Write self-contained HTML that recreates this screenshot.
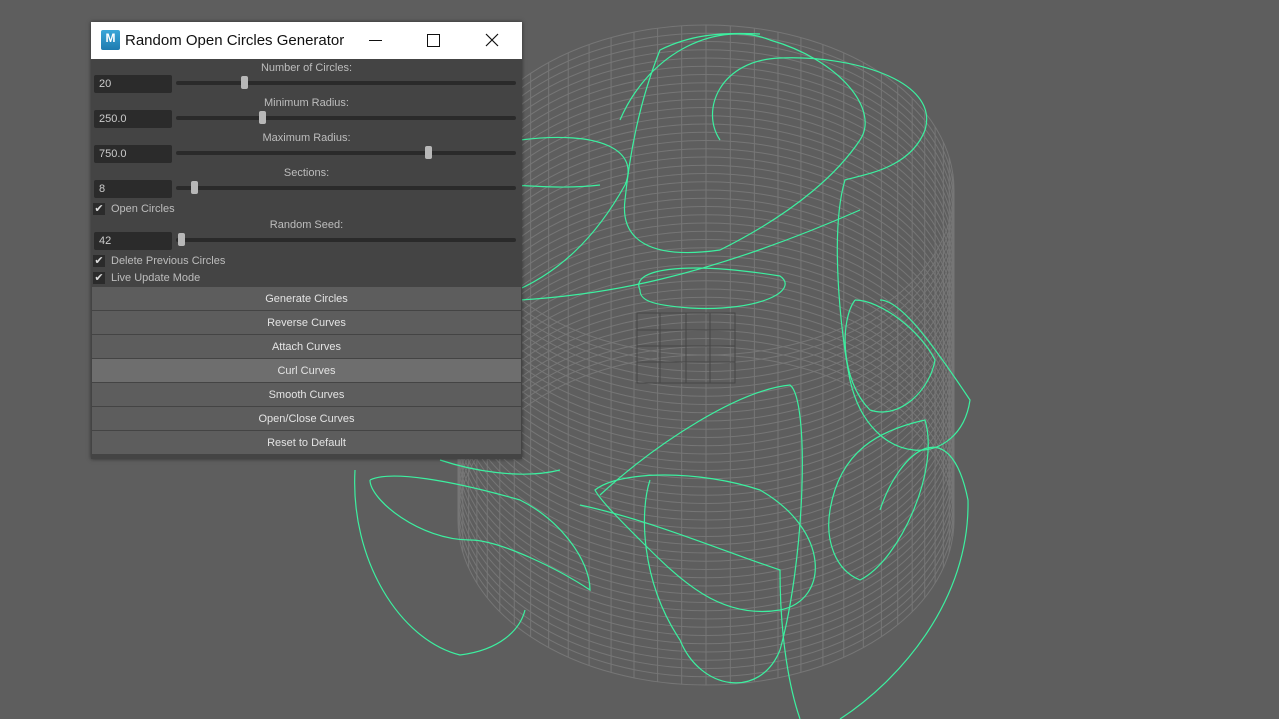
<!DOCTYPE html>
<html><head><meta charset="utf-8"><style>
body{margin:0;width:1279px;height:719px;background:#5e5e5e;overflow:hidden;position:relative;font-family:"Liberation Sans",sans-serif}
#vp{position:absolute;left:0;top:0}
.dlg{position:absolute;left:91px;top:22px;width:431px;height:437px;background:#444;box-shadow:0 0 4px rgba(0,0,0,.5)}
.tb{position:absolute;left:0;top:0;width:431px;height:37px;background:#fff}
.tb .t{position:absolute;left:34px;top:10px;font-size:15px;color:#111}
.logo{position:absolute;left:10px;top:8px;width:19px;height:20px;background:linear-gradient(#3aa6d8,#1e7bb0);border-radius:2px;color:#fff;font-size:12px;font-weight:bold;text-align:center;line-height:16px}
.lbl{position:absolute;left:0;width:431px;text-align:center;font-size:11px;color:#bdbdbd}
.fld{position:absolute;left:3px;width:78px;height:18px;background:#2b2b2b;border-radius:2px;color:#ccc;font-size:11px;line-height:19px;box-sizing:border-box;padding-left:5px}
.trk{position:absolute;left:85px;width:340px;height:4px;background:#2a2a2a;border-radius:2px}
.hd{position:absolute;width:7px;height:13px;background:#b8b8b8;border-radius:2px}
.cb{position:absolute;left:2px;width:12px;height:12px;background:#2b2b2b;color:#ddd;font-size:11px;line-height:12px;text-align:center}
.cl{position:absolute;left:20px;font-size:11px;color:#bdbdbd}
.btn{position:absolute;left:1px;width:429px;height:23px;background:#5d5d5d;color:#e4e4e4;font-size:11px;text-align:center;line-height:25px}
</style></head><body>
<svg id="vp" width="1279" height="719"><g id="cyl" stroke="#8a8a8a" stroke-width="1" fill="none" opacity="0.55"></g><g id="cur" stroke="#3cf0a0" stroke-width="1.2" fill="none">
<path d="M520 140 C600 130 640 150 625 185 C600 230 560 280 490 300"/>
<path d="M440 180 C520 185 560 190 600 185"/>
<path d="M620 120 C650 50 720 20 770 40 C840 60 880 110 860 140 C840 170 800 210 720 250 C650 260 620 240 625 200 C630 150 640 100 660 50 C690 35 720 32 760 34"/>
<path d="M720 140 C700 110 720 60 780 58 C850 55 940 80 925 130 C910 170 860 175 845 180 C830 230 840 330 850 380 C870 470 960 470 970 400 C930 340 900 300 880 300"/>
<path d="M640 290 C630 270 680 260 780 276 C800 290 760 312 690 308 C650 305 640 300 640 290 Z"/>
<path d="M520 300 C600 295 700 280 860 210"/>
<path d="M855 300 C880 300 920 330 935 360 C930 390 900 420 870 410 C840 380 840 320 855 300"/>
<path d="M880 510 C900 450 950 410 968 500 C970 600 900 680 840 719"/>
<path d="M600 495 C660 440 740 390 790 385 C810 400 805 560 780 650 C760 700 700 690 680 640 C640 580 640 510 650 480"/>
<path d="M595 490 C620 470 700 470 760 490 C830 530 830 600 780 610 C720 620 680 580 640 540 C620 520 600 500 595 490 Z"/>
<path d="M580 505 C650 520 720 550 780 570 C780 640 790 690 800 719"/>
<path d="M355 470 C350 560 400 640 460 655 C500 650 520 630 525 610"/>
<path d="M370 480 C390 470 450 480 520 500 C560 520 590 560 590 590 C560 570 500 540 470 540 C420 540 370 500 370 480"/>
<path d="M440 460 C470 470 520 480 560 470"/>
<path d="M830 510 C840 450 880 430 925 420 C940 470 900 560 860 580 C835 570 825 540 830 510"/>
</g></svg>
<div class="dlg">
<div class="tb"><div class="logo">M</div><div class="t">Random Open Circles Generator</div>
<div style="position:absolute;left:278px;top:18px;width:13px;height:1px;background:#111"></div>
<div style="position:absolute;left:336px;top:12px;width:11px;height:11px;border:1px solid #111"></div>
<svg style="position:absolute;left:394px;top:11px" width="14" height="14"><path d="M1 1L13 13M13 1L1 13" stroke="#111" stroke-width="1.2"/></svg></div>
<div class="lbl" style="top:40px">Number of Circles:</div>
<div class="fld" style="top:53px">20</div><div class="trk" style="top:59px"></div><div class="hd" style="left:150px;top:54px"></div>
<div class="lbl" style="top:75px">Minimum Radius:</div>
<div class="fld" style="top:88px">250.0</div><div class="trk" style="top:94px"></div><div class="hd" style="left:168px;top:89px"></div>
<div class="lbl" style="top:110px">Maximum Radius:</div>
<div class="fld" style="top:123px">750.0</div><div class="trk" style="top:129px"></div><div class="hd" style="left:334px;top:124px"></div>
<div class="lbl" style="top:145px">Sections:</div>
<div class="fld" style="top:158px">8</div><div class="trk" style="top:164px"></div><div class="hd" style="left:100px;top:159px"></div>
<div class="cb" style="top:181px">✔</div><div class="cl" style="top:181px">Open Circles</div>
<div class="lbl" style="top:197px">Random Seed:</div>
<div class="fld" style="top:210px">42</div><div class="trk" style="top:216px"></div><div class="hd" style="left:87px;top:211px"></div>
<div class="cb" style="top:233px">✔</div><div class="cl" style="top:233px">Delete Previous Circles</div>
<div class="cb" style="top:250px">✔</div><div class="cl" style="top:250px">Live Update Mode</div>
<div class="btn" style="top:265px">Generate Circles</div>
<div class="btn" style="top:289px">Reverse Curves</div>
<div class="btn" style="top:313px">Attach Curves</div>
<div class="btn" style="top:337px;background:#6e6e6e">Curl Curves</div>
<div class="btn" style="top:361px">Smooth Curves</div>
<div class="btn" style="top:385px">Open/Close Curves</div>
<div class="btn" style="top:409px">Reset to Default</div>
</div>
<script>
var g=document.getElementById('cyl'),s='';
var cx=706,rx=248,ry=165,ty=190,by=520;
for(var i=0;i<=40;i++){var y=ty+(by-ty)*i/40;
s+='<ellipse cx="'+cx+'" cy="'+y+'" rx="'+rx+'" ry="'+ry+'"/>';}
for(var k=0;k<64;k++){var a=k/64*Math.PI*2,x=cx+rx*Math.cos(a),dy=ry*Math.sin(a);
s+='<line x1="'+x+'" y1="'+(ty+dy)+'" x2="'+x+'" y2="'+(by+dy)+'"/>';}
s+='<g stroke="#333" opacity="1"><rect x="637" y="313" width="98" height="70"/><path d="M637 330H735M637 346H735M637 362H735M660 313V383M686 313V383M710 313V383"/></g>';
g.innerHTML=s;
</script>
</body></html>
